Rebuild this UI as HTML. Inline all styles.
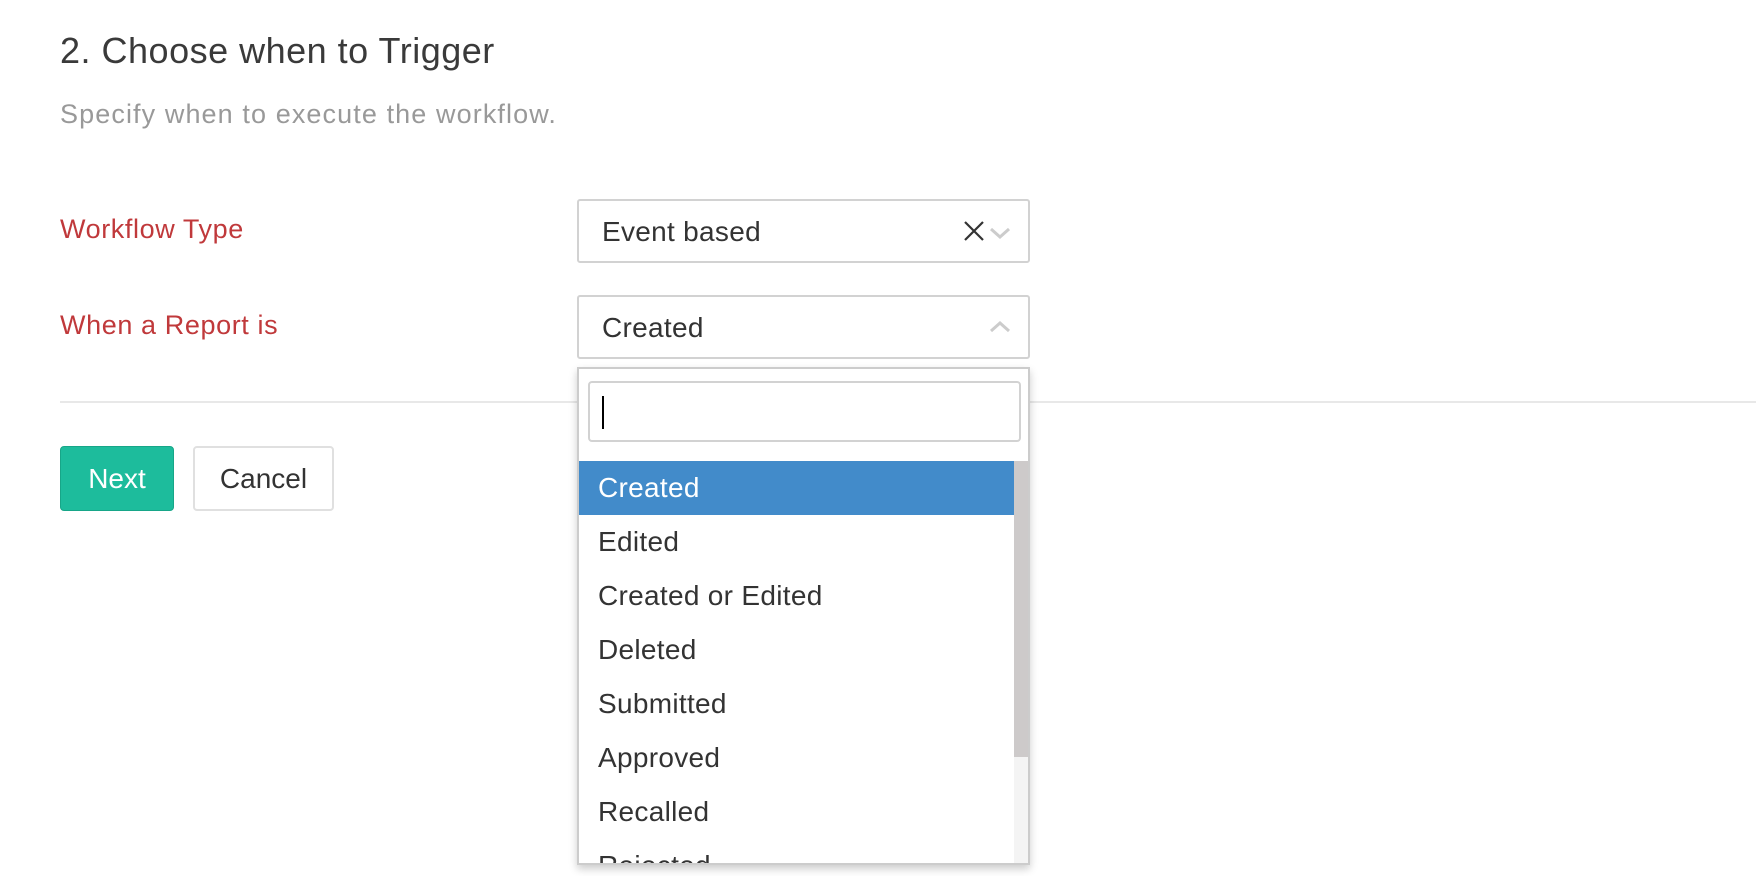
<!DOCTYPE html>
<html><head><meta charset="utf-8"><style>
*{box-sizing:border-box;margin:0;padding:0}
body{width:1756px;height:876px;background:#fff;font-family:"Liberation Sans",sans-serif;position:relative;overflow:hidden;color:#333}
.a{position:absolute;white-space:nowrap}
.sel{position:absolute;left:577px;width:453px;height:64px;border:2px solid #d2d2d2;border-radius:3px;background:#fff}
.sel span{position:absolute;left:23px;top:15px;font-size:28px;color:#333;letter-spacing:0.3px}
.item{position:absolute;left:0;width:435px;height:54px;line-height:54px;padding-left:19px;font-size:28px;color:#333;letter-spacing:0.3px}
</style></head><body>
<div class="a" style="left:60px;top:30px;font-size:36px;color:#3a3a3a;letter-spacing:0.5px">2. Choose when to Trigger</div>
<div class="a" style="left:60px;top:99px;font-size:27px;color:#999;letter-spacing:1.1px">Specify when to execute the workflow.</div>
<div class="a" style="left:60px;top:214px;font-size:27px;color:#c0393b;letter-spacing:0.6px">Workflow Type</div>
<div class="a" style="left:60px;top:310px;font-size:27px;color:#c0393b;letter-spacing:0.6px">When a Report is</div>
<div class="sel" style="top:199px"><span>Event based</span>
<svg class="a" style="left:384px;top:19px" width="22" height="22" viewBox="0 0 22 22"><path d="M2 2L20 20M20 2L2 20" stroke="#333" stroke-width="2.2" fill="none"/></svg>
<svg class="a" style="left:410px;top:25px" width="22" height="14" viewBox="0 0 22 14"><path d="M2 3L11 11L20 3" stroke="#ccc" stroke-width="3" fill="none"/></svg>
</div>
<div class="sel" style="top:295px"><span>Created</span>
<svg class="a" style="left:410px;top:23px" width="22" height="14" viewBox="0 0 22 14"><path d="M2 11L11 3L20 11" stroke="#ccc" stroke-width="3" fill="none"/></svg>
</div>
<div class="a" style="left:60px;top:401px;width:1700px;height:2px;background:#e8e8e8"></div>
<div class="a" style="left:60px;top:446px;width:114px;height:65px;background:#1dbc9c;border:1px solid #17a688;border-radius:4px;color:#fff;font-size:28px;line-height:63px;text-align:center">Next</div>
<div class="a" style="left:193px;top:446px;width:141px;height:65px;background:#fff;border:2px solid #e0e0e0;border-radius:4px;color:#333;font-size:28px;line-height:61px;text-align:center">Cancel</div>
<div class="a" style="left:577px;top:367px;width:453px;height:498px;border:2px solid #ccc;background:#fff;box-shadow:0 4px 8px rgba(0,0,0,.2);overflow:hidden">
 <div class="a" style="left:9px;top:12px;width:433px;height:61px;border:2px solid #d2d2d2;border-radius:4px"><div class="a" style="left:12px;top:13px;width:2px;height:33px;background:#000"></div></div>
 <div class="a" style="left:435px;top:92px;width:16px;height:410px;background:#f4f4f4"></div>
 <div class="a" style="left:435px;top:92px;width:16px;height:296px;background:#cdcaca"></div>
 <div class="item" style="top:92px;background:#428bca;color:#fff">Created</div>
 <div class="item" style="top:146px">Edited</div>
 <div class="item" style="top:200px">Created or Edited</div>
 <div class="item" style="top:254px">Deleted</div>
 <div class="item" style="top:308px">Submitted</div>
 <div class="item" style="top:362px">Approved</div>
 <div class="item" style="top:416px">Recalled</div>
 <div class="item" style="top:470px">Rejected</div>
</div>
</body></html>
